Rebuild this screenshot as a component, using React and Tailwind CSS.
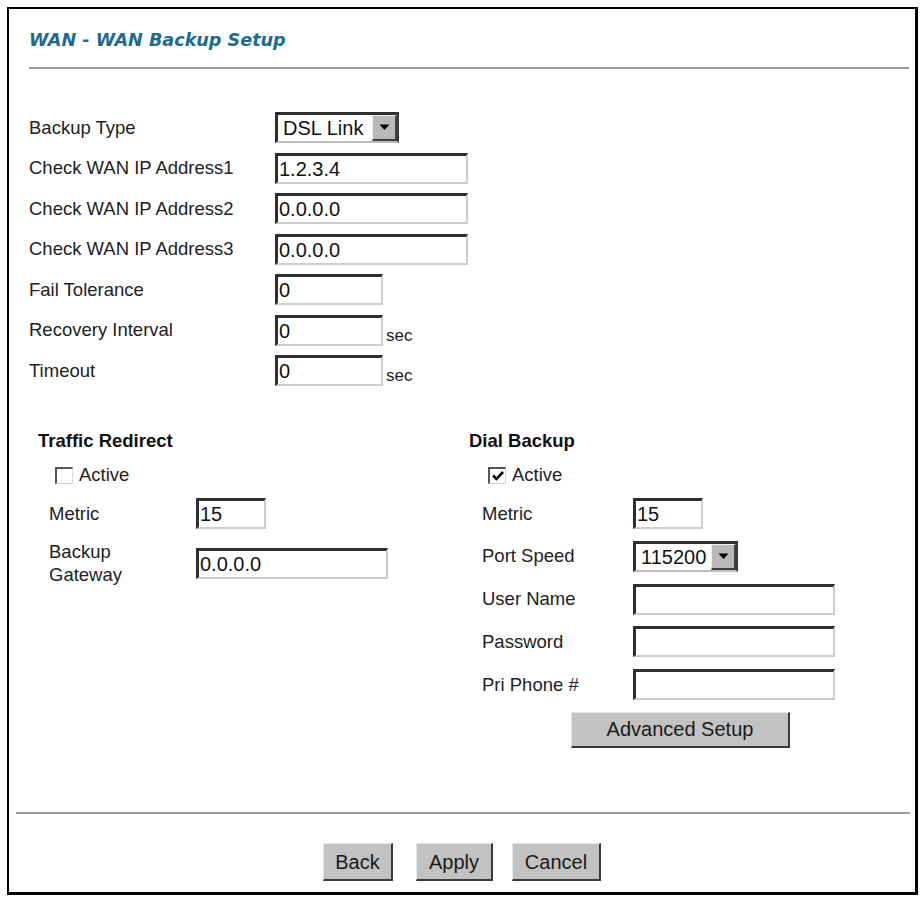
const body = { fontFamily: '"Liberation Sans", Arial, sans-serif' }
const title = { fontFamily: '"DejaVu Sans", Verdana, sans-serif' }

function TextBox({ w, value = '' }) {
  return (
    <div
      className={`${w} flex h-[31px] shrink-0 items-center border-t-[3px] border-l-[3px] border-r-2 border-b-2 border-t-[#2e2e2e] border-l-[#2e2e2e] border-r-[#cdcdcd] border-b-[#cdcdcd] bg-white pl-px text-[20px] leading-none text-[#111]`}
    >
      {value}
    </div>
  )
}

function Select({ w, value }) {
  return (
    <div
      className={`${w} flex h-[31px] shrink-0 items-stretch border-t-[3px] border-l-[3px] border-r-2 border-b-2 border-t-[#2e2e2e] border-l-[#2e2e2e] border-r-[#3a3a3a] border-b-[#bdbdbd] bg-white text-[20px] leading-none text-[#111]`}
    >
      <span className="flex flex-1 items-center pl-[5px]">{value}</span>
      <span className="flex w-[25px] items-center justify-center border-t border-l border-r-2 border-b-2 border-t-[#eeeeee] border-l-[#eeeeee] border-r-[#404040] border-b-[#404040] bg-[#b9b9b9]">
        <svg width="11" height="7" viewBox="0 0 11 7">
          <path d="M0.5 0.5h10L5.5 6z" fill="#000" />
        </svg>
      </span>
    </div>
  )
}

function Check({ checked }) {
  return (
    <span className="flex h-[17px] w-[18px] items-center justify-center border-t-2 border-l-2 border-r border-b border-t-[#555] border-l-[#555] border-r-[#d6d6d6] border-b-[#d6d6d6] bg-white">
      {checked ? (
        <svg width="12" height="10" viewBox="0 0 12 10">
          <path d="M1 4.5l3.5 3.5 6.5-7" fill="none" stroke="#000" strokeWidth="2.6" />
        </svg>
      ) : null}
    </span>
  )
}

function Btn({ w, h = 'h-[38px]', children }) {
  return (
    <button
      type="button"
      className={`${w} ${h} shrink-0 border-t border-l border-r-2 border-b-2 border-t-[#e4e4e4] border-l-[#e4e4e4] border-r-[#3a3a3a] border-b-[#3a3a3a] bg-[#c2c2c2] text-[20px] leading-none text-[#1a1a1a]`}
    >
      {children}
    </button>
  )
}

function Row({ label, children }) {
  return (
    <div className="flex h-[31px] items-center">
      <span className="w-[246px] shrink-0">{label}</span>
      {children}
    </div>
  )
}

function Field({ label, labelW, offset, children, tall }) {
  return (
    <div className={`flex items-center ${tall ? 'h-[46px]' : 'h-[31px]'}`}>
      <span className={`${offset} ${labelW} shrink-0 ${tall ? 'leading-[23px]' : ''}`}>{label}</span>
      {children}
    </div>
  )
}

export default function App() {
  return (
    <div className="min-h-screen bg-white pl-[7px] pt-[7px] text-[18.5px] text-[#222]" style={body}>
      <div className="flex h-[888px] w-[911px] flex-col border-l-2 border-t-2 border-r-[3px] border-b-[3px] border-black">
        <h1
          className="ml-[20px] mt-[19px] h-[24px] text-[17.6px] font-bold italic leading-[24px] text-[#1c6a93]"
          style={title}
        >
          WAN - WAN Backup Setup
        </h1>
        <div className="ml-[20px] mt-[15px] h-[2px] w-[880px] bg-[#9b9b9b]" />

        <div className="ml-[20px] mt-[43px] flex flex-col gap-[9.5px]">
          <Row label="Backup Type">
            <Select w="w-[124px]" value="DSL Link" />
          </Row>
          <Row label="Check WAN IP Address1">
            <TextBox w="w-[193px]" value="1.2.3.4" />
          </Row>
          <Row label="Check WAN IP Address2">
            <TextBox w="w-[193px]" value="0.0.0.0" />
          </Row>
          <Row label="Check WAN IP Address3">
            <TextBox w="w-[193px]" value="0.0.0.0" />
          </Row>
          <Row label="Fail Tolerance">
            <TextBox w="w-[108px]" value="0" />
          </Row>
          <div className="flex h-[31px]">
            <span className="w-[246px] shrink-0 self-center">Recovery Interval</span>
            <TextBox w="w-[108px]" value="0" />
            <span className="ml-[3px] self-end text-[17px] leading-[21px]">sec</span>
          </div>
          <div className="flex h-[31px]">
            <span className="w-[246px] shrink-0 self-center">Timeout</span>
            <TextBox w="w-[108px]" value="0" />
            <span className="ml-[3px] self-end text-[17px] leading-[21px]">sec</span>
          </div>
        </div>

        <div className="ml-[29px] mt-[44px] flex">
          <div className="flex w-[431px] flex-col">
            <h2 className="h-[22px] font-bold leading-[22px] text-[#111]">Traffic Redirect</h2>
            <label className="ml-[17px] mt-[13px] flex h-[20px] items-center">
              <Check />
              <span className="ml-[6px]">Active</span>
            </label>
            <div className="mt-[13px]">
              <Field label="Metric" offset="ml-[11px]" labelW="w-[147px]">
                <TextBox w="w-[70px]" value="15" />
              </Field>
            </div>
            <div className="mt-[11px]">
              <Field
                tall
                label={
                  <>
                    Backup
                    <br />
                    Gateway
                  </>
                }
                offset="ml-[11px]"
                labelW="w-[147px]"
              >
                <TextBox w="w-[192px]" value="0.0.0.0" />
              </Field>
            </div>
          </div>

          <div className="flex flex-col">
            <h2 className="h-[22px] font-bold leading-[22px] text-[#111]">Dial Backup</h2>
            <label className="ml-[19px] mt-[13px] flex h-[20px] items-center">
              <Check checked />
              <span className="ml-[6px]">Active</span>
            </label>
            <div className="mt-[13px] flex flex-col gap-[11.8px]">
              <Field label="Metric" offset="ml-[13px]" labelW="w-[151px]">
                <TextBox w="w-[70px]" value="15" />
              </Field>
              <Field label="Port Speed" offset="ml-[13px]" labelW="w-[151px]">
                <Select w="w-[105px]" value="115200" />
              </Field>
              <Field label="User Name" offset="ml-[13px]" labelW="w-[151px]">
                <TextBox w="w-[202px]" />
              </Field>
              <Field label="Password" offset="ml-[13px]" labelW="w-[151px]">
                <TextBox w="w-[202px]" />
              </Field>
              <Field label="Pri Phone #" offset="ml-[13px]" labelW="w-[151px]">
                <TextBox w="w-[202px]" />
              </Field>
              <div className="ml-[102px]">
                <Btn w="w-[219px]" h="h-[36px]">Advanced Setup</Btn>
              </div>
            </div>
          </div>
        </div>

        <div className="mt-auto ml-[7px] h-[2px] w-[894px] bg-[#9b9b9b]" />
        <div className="mb-[11px] mt-[29px] flex justify-center">
          <Btn w="w-[70px]">Back</Btn>
          <div className="ml-[23px]">
            <Btn w="w-[77px]">Apply</Btn>
          </div>
          <div className="ml-[19px]">
            <Btn w="w-[89px]">Cancel</Btn>
          </div>
        </div>
      </div>
    </div>
  )
}
